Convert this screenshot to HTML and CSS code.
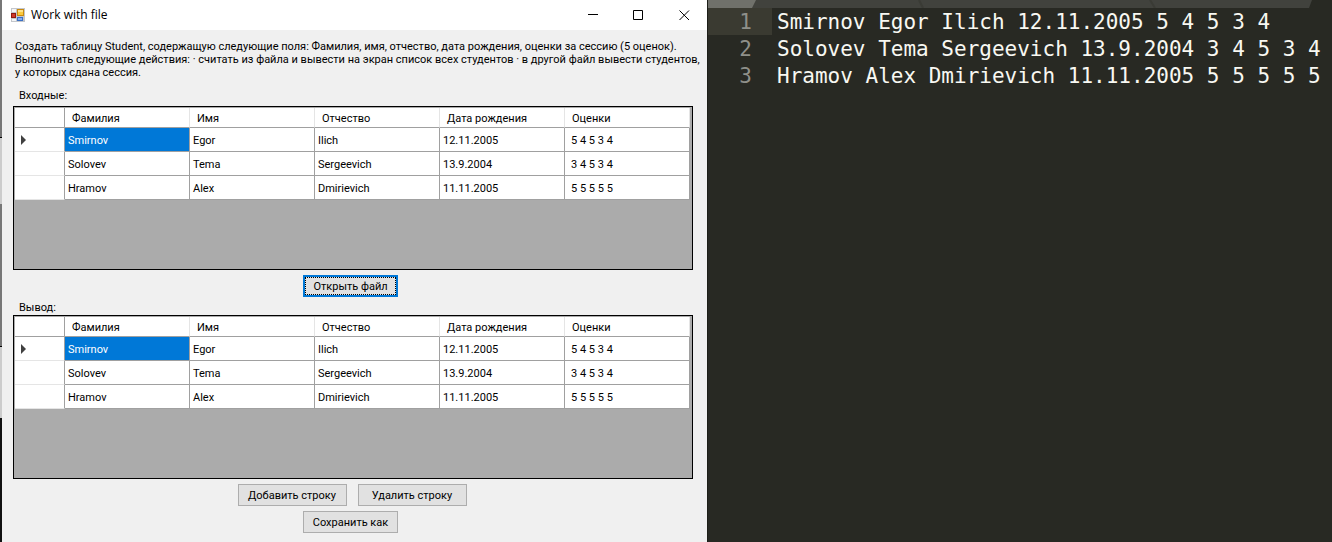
FILE: index.html
```html
<!DOCTYPE html>
<html lang="ru">
<head>
<meta charset="utf-8">
<title>Work with file</title>
<link rel="stylesheet" href="styles.css">
</head>
<body>
<div class="desktop">
  <div class="behind"></div>
  <main class="window">
    <header class="titlebar">
      <svg class="app-icon" width="14" height="14" viewBox="0 0 14 14" aria-hidden="true">
        <rect width="14" height="14" fill="#c3c6cb"/>
        <rect x="1" y="1" width="4" height="3" fill="#f4f5f6"/>
        <rect x="1" y="11" width="4" height="2" fill="#f4f5f6"/>
        <rect x="0" y="5" width="5" height="5" fill="#8f1a10"/>
        <rect x="1" y="6" width="3" height="3" fill="#cf3a2c"/>
        <rect x="6" y="1" width="7" height="7" fill="#c98a10"/>
        <rect x="7" y="2" width="5" height="5" fill="#fbc93c"/>
        <rect x="7" y="2" width="5" height="2" fill="#fde28a"/>
        <rect x="6" y="9" width="6" height="4" fill="#3a6fc4"/>
        <rect x="7" y="10" width="4" height="2" fill="#86aef0"/>
      </svg>
      <h1 class="title">Work with file</h1>
      <div class="controls">
        <button class="control" type="button" aria-label="Minimize"><svg width="11" height="11" viewBox="0 0 11 11"><path d="M1 4.5H11"/></svg></button>
        <button class="control" type="button" aria-label="Maximize"><svg width="11" height="11" viewBox="0 0 11 11"><path d="M.5 .5H9.500V9.500H.5Z"/></svg></button>
        <button class="control" type="button" aria-label="Close"><svg width="11" height="11" viewBox="0 0 11 11"><path d="M.5 .5L10 10M10 .5L.5 10"/></svg></button>
      </div>
    </header>
    <div class="form">
      <p class="task">Создать таблицу Student, содержащую следующие поля: Фамилия, имя, отчество, дата рождения, оценки за сессию (5 оценок).<br>Выполнить следующие действия: · считать из файла и вывести на экран список всех студентов · в другой файл вывести студентов,<br>у которых сдана сессия.</p>
      <h2 class="label" id="in">Входные:</h2>
      <div class="grid">
        <table class="table" aria-labelledby="in">
          <thead><tr><th class="marker"></th><th>Фамилия</th><th>Имя</th><th>Отчество</th><th>Дата рождения</th><th>Оценки</th></tr></thead>
          <tbody>
            <tr><td class="marker"><svg width="5" height="10" viewBox="0 0 5 10"><path d="M0 0L5 5L0 10Z"/></svg></td><td class="selected">Smirnov</td><td>Egor</td><td>Ilich</td><td>12.11.2005</td><td class="marks">5 4 5 3 4</td></tr>
            <tr><td class="marker"></td><td>Solovev</td><td>Tema</td><td>Sergeevich</td><td>13.9.2004</td><td class="marks">3 4 5 3 4</td></tr>
            <tr><td class="marker"></td><td>Hramov</td><td>Alex</td><td>Dmirievich</td><td>11.11.2005</td><td class="marks">5 5 5 5 5</td></tr>
          </tbody>
        </table>
      </div>
      <div class="actions single"><button class="button focused" type="button">Открыть файл</button></div>
      <h2 class="label tight" id="out">Вывод:</h2>
      <div class="grid">
        <table class="table" aria-labelledby="out">
          <thead><tr><th class="marker"></th><th>Фамилия</th><th>Имя</th><th>Отчество</th><th>Дата рождения</th><th>Оценки</th></tr></thead>
          <tbody>
            <tr><td class="marker"><svg width="5" height="10" viewBox="0 0 5 10"><path d="M0 0L5 5L0 10Z"/></svg></td><td class="selected">Smirnov</td><td>Egor</td><td>Ilich</td><td>12.11.2005</td><td class="marks">5 4 5 3 4</td></tr>
            <tr><td class="marker"></td><td>Solovev</td><td>Tema</td><td>Sergeevich</td><td>13.9.2004</td><td class="marks">3 4 5 3 4</td></tr>
            <tr><td class="marker"></td><td>Hramov</td><td>Alex</td><td>Dmirievich</td><td>11.11.2005</td><td class="marks">5 5 5 5 5</td></tr>
          </tbody>
        </table>
      </div>
      <div class="actions"><button class="button wide" type="button">Добавить строку</button><button class="button wide" type="button">Удалить строку</button></div>
      <div class="actions single"><button class="button" type="button">Сохранить как</button></div>
    </div>
  </main>
  <section class="editor" aria-label="Editor">
    <svg class="tabs" height="8" aria-hidden="true">
      <path d="M0 0H604L601 8H0Z" fill="#41423d"/>
      <path d="M0 0H48L44 8H0Z" fill="#70716b"/>
      <path d="M211 0L215 8M442 0L447 8" stroke="#3a3b35" stroke-width="2" fill="none"/>
    </svg>
    <ol class="code">
      <li class="line current"><span class="number">1</span><span class="text">Smirnov Egor Ilich 12.11.2005 5 4 5 3 4</span></li>
      <li class="line"><span class="number">2</span><span class="text">Solovev Tema Sergeevich 13.9.2004 3 4 5 3 4</span></li>
      <li class="line"><span class="number">3</span><span class="text">Hramov Alex Dmirievich 11.11.2005 5 5 5 5 5</span></li>
    </ol>
  </section>
</div>
</body>
</html>
```
FILE: styles.css
```css
* { box-sizing: border-box; }

body {
  margin: 0;
  font: 11px/13px Roboto, "Liberation Sans", sans-serif;
  color: #000;
}

.desktop {
  display: grid;
  grid-template-columns: 2px 705fr 625fr;
  min-height: 100vh;
}

.behind {
  background: linear-gradient(#777 0 137px, #000 137px 138px, #ccc 138px 204px, #777 204px 346px, #000 346px 347px, #ccc 347px 418px, #111 418px);
}

.window { background: #f0f0f0; min-width: 0; }

.titlebar {
  display: flex;
  align-items: center;
  height: 30px;
  padding-left: 9px;
  background: #fff;
}

.title {
  flex: 1;
  margin: 0 0 0 6px;
  font: 12px/16px "Open Sans", "Noto Sans", sans-serif;
}

.controls { display: flex; }

.control {
  display: grid;
  place-items: center;
  width: 46px;
  height: 30px;
  padding: 0;
  border: 0;
  background: none;
}

.control path { fill: none; stroke: #000; }

.form { padding: 10px 14px 9px 11px; }

.task { margin: 0 0 10px 2px; white-space: nowrap; }

.label { margin: 0 0 4px 6px; font: inherit; }

.tight { margin-bottom: 1px; }

.grid {
  height: 164px;
  padding: 1px 2px 0 1px;
  border: 1px solid #000;
  background: #ababab;
}

.table {
  width: 100%;
  table-layout: fixed;
  border-spacing: 0;
  background: #fff;
}

.table th,
.table td {
  height: 24px;
  padding: 1px 0 0 3px;
  border: solid #a0a0a0;
  border-width: 0 1px 1px 0;
  font-weight: 400;
  text-align: left;
}

.table th {
  height: 20px;
  padding-left: 7px;
  border-right-color: #e5e5e5;
}

.table .marker {
  width: 50px;
  padding-left: 6px;
  border-right-color: #a0a0a0;
}

.table td.marker { border-bottom-color: #e5e5e5; }

.marker svg { display: block; fill: #404040; }

.table .marks { padding-left: 6px; }

.table .selected { background: #0078d7; color: #fff; }

.actions {
  display: flex;
  justify-content: center;
  gap: 11px;
  margin: 5px 0 4px;
  padding-right: 2px;
}

.single { padding-right: 5px; }

.button {
  width: 95px;
  height: 22px;
  padding: 0;
  border: 1px solid #adadad;
  background: #e1e1e1;
  color: #000;
  font: inherit;
}

.wide { width: 109px; }

.focused {
  border: 2px solid #0078d7;
  outline: 1px dotted #000;
  outline-offset: -3px;
}

.editor { min-width: 0; background: #282923; border-left: 1px solid #1d1e19; }

.tabs { display: block; width: 100%; }

.code {
  margin: 0;
  padding: 0;
  list-style: none;
  font: 21px/25px "DejaVu Sans Mono", monospace;
}

.line { display: flex; }

.number {
  width: 64px;
  padding: 2px 20px 0 0;
  color: #8f908a;
  text-align: right;
}

.current .number { background: #3a3a31; }

.text { padding: 2px 0 0 5px; color: #f8f8f2; white-space: pre; }
```
